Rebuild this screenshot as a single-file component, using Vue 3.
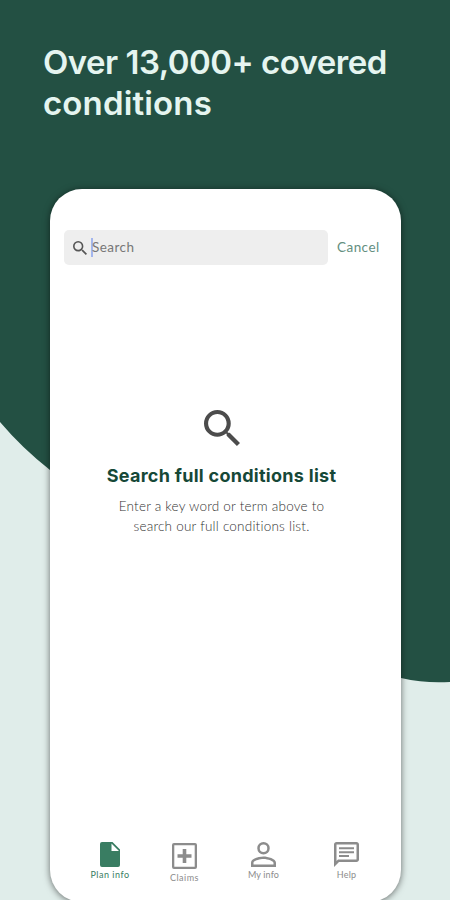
<template>
  <div class="page">
    <svg class="backdrop" viewBox="0 0 450 900" aria-hidden="true">
      <path d="M0 0H450V682C434 683 418 682 401 678C270 651 145 560 50 470Q22 448 0 422Z" fill="#235043" />
    </svg>

    <h1 class="headline">
      <span class="line-one">Over 13,000+ covered</span><br />
      <span class="line-two">conditions</span>
    </h1>

    <main class="phone">
      <div class="search-row">
        <div class="search-box">
          <svg class="search-icon" viewBox="3 3 17.49 17.49">
            <path :d="searchPath" />
          </svg>
          <span class="caret"></span>
          <span class="placeholder">Search</span>
        </div>
        <span class="cancel">Cancel</span>
      </div>

      <section class="empty">
        <svg class="empty-icon" viewBox="3 3 17.49 17.49">
          <path :d="searchPath" />
        </svg>
        <h2>Search full conditions list</h2>
        <p>
          Enter a key word or term above to<br />
          search our full conditions list.
        </p>
      </section>

      <nav class="tabs">
        <div v-for="tab in tabs" :key="tab.key" class="tab" :class="[tab.key, { active: tab.active }]">
          <svg :viewBox="tab.box">
            <path :d="tab.path" fill-rule="evenodd" />
          </svg>
          <span>{{ tab.label }}</span>
        </div>
      </nav>
    </main>
  </div>
</template>

<script setup>
const searchPath =
  'M15.5 14h-.79l-.28-.27A6.47 6.47 0 0 0 16 9.5 6.5 6.5 0 1 0 9.5 16c1.61 0 3.09-.59 4.23-1.57l.27.28v.79l5 4.99L20.49 19l-4.99-5zm-6 0C7.01 14 5 11.99 5 9.5S7.01 5 9.5 5 14 7.01 14 9.5 11.99 14 9.5 14z'

// bottom navigation
const tabs = [
  {
    key: 'plan',
    label: 'Plan info',
    active: true,
    box: '0 0 20 25',
    path: 'M2 0H12.5L20 7.5V23Q20 25 18 25H2Q0 25 0 23V2Q0 0 2 0ZM11.5 1.5V9H19Z'
  },
  {
    key: 'claims',
    label: 'Claims',
    box: '0 0 25 26',
    path: 'M2 0H23Q25 0 25 2V24Q25 26 23 26H2Q0 26 0 24V2Q0 0 2 0ZM2.3 2.3V23.7H22.7V2.3ZM10.7 6H14.3V11.2H19.5V14.8H14.3V20H10.7V14.8H5.5V11.2H10.7Z'
  },
  {
    key: 'account',
    label: 'My info',
    box: '4 4 16 16',
    path: 'M12 5.6a2.4 2.4 0 1 1 0 4.8 2.4 2.4 0 0 1 0-4.8M12 4a4 4 0 1 0 0 8 4 4 0 0 0 0-8zm0 9.2c-2.67 0-8 1.34-8 4V20h16v-2.8c0-2.66-5.33-4-8-4zm0 1.6c2.97 0 6.4 1.46 6.4 2.4v1.2H5.6v-1.2c0-.94 3.43-2.4 6.4-2.4z'
  },
  {
    key: 'help',
    label: 'Help',
    box: '2 2 20 20',
    path: 'M4 2h16c1.1 0 2 .9 2 2v12c0 1.1-.9 2-2 2H6l-4 4V4c0-1.1.9-2 2-2zm0 2v13.2L5.2 16H20V4H4zm2 2.2h12v1.6H6V6.2zm0 3.1h12v1.6H6V9.3zm0 3.1h8V14H6v-1.6z'
  }
]
</script>

<style>
body {
  margin: 0;
  overflow: hidden;
}
</style>

<style scoped>
.page {
  position: relative;
  box-sizing: border-box;
  width: 450px;
  height: 900px;
  padding-top: 42px;
  overflow: hidden;
  background: #e0edea;
  font-family: Inter, "Open Sans", sans-serif;
}

.backdrop {
  position: absolute;
  top: 0;
  left: 0;
  width: 450px;
  height: 900px;
}

.headline {
  position: relative;
  height: 82px;
  margin: 0 0 65px 43px;
  color: #e5f5f0;
  font-size: 33px;
  font-weight: 600;
  line-height: 41px;
  white-space: nowrap;
}

.line-one {
  letter-spacing: -0.52px;
}

.line-two {
  letter-spacing: 0.15px;
}

.phone {
  position: relative;
  display: flex;
  flex-direction: column;
  box-sizing: border-box;
  width: 351px;
  height: 713px;
  margin-left: 50px;
  padding-top: 41px;
  border-radius: 32px;
  background: #fff;
  box-shadow: 0 1px 7px rgba(0, 0, 0, 0.55);
}

.search-row {
  display: flex;
  align-items: center;
  height: 35px;
  padding-left: 14px;
}

.search-box {
  display: flex;
  align-items: center;
  box-sizing: border-box;
  width: 264px;
  height: 35px;
  padding-left: 9px;
  border-radius: 5px;
  background: #eee;
}

.search-icon {
  width: 14px;
  height: 14px;
  fill: #555;
}

.caret {
  width: 2px;
  height: 19px;
  margin-left: 4px;
  margin-right: -1px;
  background: #a3b6ee;
}

.placeholder {
  padding-bottom: 2px;
  color: #777;
  font-family: Lato, sans-serif;
  font-size: 13.5px;
  letter-spacing: 0.45px;
}

.cancel {
  margin-left: 9px;
  padding-bottom: 1px;
  color: #648f7f;
  font-family: Lato, sans-serif;
  font-size: 13.5px;
  letter-spacing: 0.45px;
}

.empty {
  display: flex;
  flex-direction: column;
  align-items: center;
  margin-top: 145px;
  padding-right: 8px;
}

.empty-icon {
  width: 36px;
  height: 36px;
  fill: #4c4c4c;
}

.empty h2 {
  margin: 17px 0 0;
  color: #164837;
  font-size: 18px;
  font-weight: 700;
  line-height: 26px;
  letter-spacing: 0.28px;
  white-space: nowrap;
}

.empty p {
  margin: 7px 0 0;
  color: #333;
  font-family: Lato, sans-serif;
  font-size: 13.5px;
  font-weight: 300;
  line-height: 20px;
  letter-spacing: 0.22px;
  font-variant-ligatures: none;
  text-align: center;
  white-space: nowrap;
}

.tabs {
  display: grid;
  grid-template-columns: 80px 69px 89px 77px;
  height: 60px;
  margin: auto 0 0 20px;
}

.tab {
  display: flex;
  flex-direction: column;
  align-items: center;
  color: #8c8c8c;
  font-family: Lato, sans-serif;
  font-size: 9px;
  line-height: 12px;
  letter-spacing: 0.15px;
}

.tab svg {
  width: 25px;
  height: 25px;
  margin-bottom: 2px;
  fill: currentColor;
}

.tab.plan {
  letter-spacing: 0.5px;
}

.tab.plan svg {
  width: 20px;
}

.tab.claims {
  padding-top: 1px;
  letter-spacing: 0.5px;
}

.tab.claims svg {
  height: 26px;
  margin-bottom: 3px;
}

.tab.active {
  color: #397d62;
}
</style>
